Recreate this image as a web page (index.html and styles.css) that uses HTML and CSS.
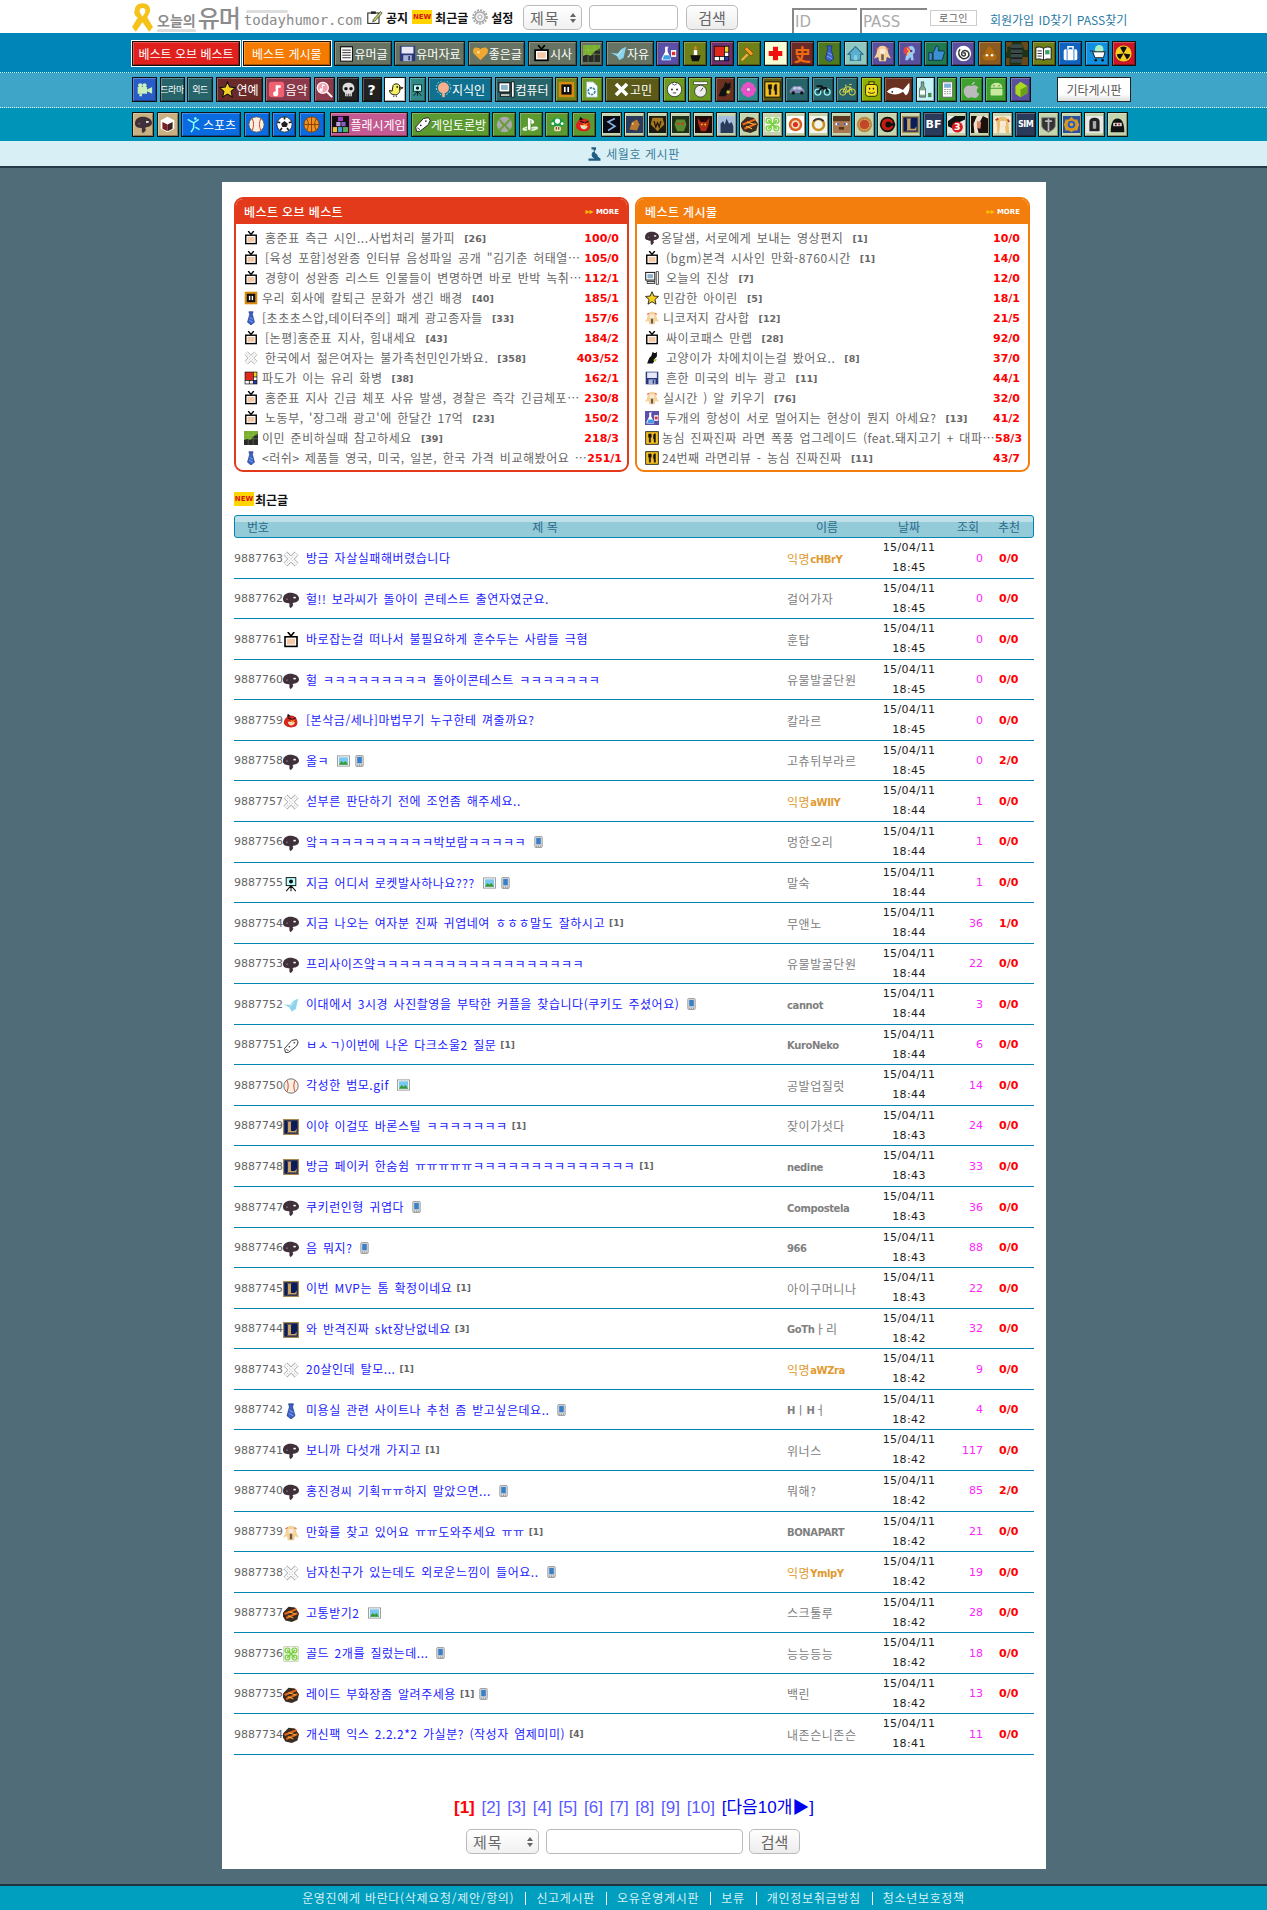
FILE: index.html
```html
<!DOCTYPE html>
<html lang="ko">
<head>
    <meta charset="UTF-8">
    <meta name="viewport" content="width=device-width, initial-scale=1.0">
    <title>오늘의유머</title>
    <link rel="stylesheet" href="styles.css">
</head>
<body>
    <!-- icon set -->
    <svg class="defs" xmlns="http://www.w3.org/2000/svg">
        <symbol id="tv" viewBox="0 0 20 20"><path d="M6 0l4 5 4-5" fill="none" stroke="#000" stroke-width="2"/><rect x="1.5" y="5" width="17" height="14" fill="#000"/><rect x="3.5" y="7" width="13" height="10" fill="#fff"/><rect x="5" y="8.500" width="10" height="7" fill="#f5c9a5"/></symbol>
        <symbol id="pal" viewBox="0 0 20 20"><path d="M0 9c0-5 4-8 9-8 6 0 11 3 11 7 0 3-3 5-6 5-1 0-2 1-2 2l1 1-2 3-2 1-1-2v-4c-4 0-8-1-8-5z" fill="#40303a"/><rect x="13" y="6" width="3" height="2" fill="#fff"/><rect x="4" y="8" width="2" height="2" fill="#7a6a70"/></symbol>
        <symbol id="gx" viewBox="0 0 20 20"><path d="M3 3l14 14M17 3L3 17" stroke="#aaa" stroke-width="6.5"/><path d="M3 3l14 14M17 3L3 17" stroke="#fff" stroke-width="4.5"/><path d="M3 3l14 14M17 3L3 17" stroke="#ccc" stroke-width="1.5" stroke-dasharray="1.5 1.5"/></symbol>
        <symbol id="chip" viewBox="0 0 20 20"><rect x="1" y="1" width="18" height="18" fill="#d98a12"/><rect x="4" y="4" width="12" height="12" fill="#111"/><rect x="7" y="7" width="2" height="6" fill="#fff"/><rect x="11" y="7" width="2" height="6" fill="#fff"/></symbol>
        <symbol id="tie" viewBox="0 0 20 20"><path d="M7 1h6l-1 4 3 11-5 4-5-4 3-11z" fill="#3a62c8" stroke="#1a2a70" stroke-width=".8"/><path d="M8 9l5 3M7 13l6 3" stroke="#9ab4f0"/></symbol>
        <symbol id="mond" viewBox="0 0 20 20"><rect x="1" y="1" width="18" height="18" fill="#111"/><rect x="2" y="2" width="11" height="11" fill="#e0281c"/><rect x="14" y="2" width="4" height="6" fill="#f5d020"/><rect x="14" y="14" width="4" height="4" fill="#2838b0"/><rect x="2" y="14" width="5" height="4" fill="#fff"/><rect x="8" y="14" width="5" height="4" fill="#eee"/><rect x="14" y="9" width="4" height="4" fill="#fff"/></symbol>
        <symbol id="chart" viewBox="0 0 20 20"><rect width="20" height="20" fill="#7ab030"/><path d="M0 20v-7l5-2 4 2 5-6 6-3v16z" fill="#2a2a2a"/><path d="M0 6h20M0 11h20M6 0v20M13 0v20" stroke="#a4d060" stroke-width=".7" opacity=".7"/></symbol>
        <symbol id="pc" viewBox="0 0 20 20"><rect x="1" y="2" width="13" height="11" fill="#fff" stroke="#111" stroke-width="1.4"/><rect x="3.500" y="4.500" width="8" height="6" fill="#8ab4c8"/><rect x="3" y="15" width="11" height="3" fill="#ddd" stroke="#111"/><rect x="16" y="1" width="3" height="18" fill="#fff" stroke="#111"/></symbol>
        <symbol id="star" viewBox="0 0 20 20"><path d="M10 1l2.600 6.200 6.600.6-5 4.400 1.500 6.600L10 15.300 4.300 18.800l1.500-6.600-5-4.400 6.600-.6z" fill="#f5d020" stroke="#111" stroke-width="1.2"/></symbol>
        <symbol id="girl" viewBox="0 0 20 20"><path d="M10 1c5 0 6 4 7 9l3 6-5-2-1 5H6l-1-5-5 2 3-6c1-5 2-9 7-9z" fill="#f3d39a"/><path d="M3 5l3-2M17 5l-3-2" stroke="#e8705a" stroke-width="1.5"/><rect x="7" y="5" width="6" height="5" fill="#fbe8d8"/><rect x="8.500" y="11" width="3" height="7" fill="#70584a"/></symbol>
        <symbol id="cat" viewBox="0 0 20 20"><path d="M11 1l2 2h2l2-2v7l-3 3-1 4-2 3H3l3-8 3-3z" fill="#111"/><path d="M13 11l4 1-2 3-3-1z" fill="#b8c840"/></symbol>
        <symbol id="floppy" viewBox="0 0 20 20"><rect x="1" y="1" width="18" height="18" fill="#28387a"/><rect x="3" y="2" width="14" height="8" fill="#e8e8f8"/><rect x="5" y="12" width="10" height="7" fill="#aab4d8"/><rect x="11" y="13" width="2" height="5" fill="#28387a"/></symbol>
        <symbol id="flask" viewBox="0 0 20 20"><rect width="20" height="20" fill="#5a50ac"/><path d="M6 2h4v1H9v5l4 8v2H2v-2l4-8V3z" fill="#fff"/><path d="M5 12h6l2 5H3z" fill="#38a0e8"/><rect x="13" y="6" width="6" height="8" fill="#fff"/><rect x="14" y="8" width="4" height="4" fill="#d83030"/></symbol>
        <symbol id="food" viewBox="0 0 20 20"><rect x="1" y="1" width="18" height="18" fill="#f5c020" stroke="#111" stroke-width="1.2"/><path d="M5 4v5h1v7h2V9h1V4M8 4v3M13 4h2v12h-2v-5h-1V6z" fill="#111" stroke="#111" stroke-width=".6"/></symbol>
        <symbol id="tripod" viewBox="0 0 20 20"><rect x="4" y="2" width="12" height="10" fill="#bff" stroke="#111" stroke-width="1.2"/><circle cx="10" cy="7" r="2.500" fill="#111"/><path d="M10 12v7M10 12l-6 7M10 12l6 7" stroke="#111" stroke-width="1.3"/></symbol>
        <symbol id="angry" viewBox="0 0 20 20"><path d="M10 3c5 0 8 4 8 9s-4 6-8 6-9-2-9-6 4-9 9-9z" fill="#d8261c"/><path d="M6 1l4 3-5 1z" fill="#111"/><path d="M6 11c3 0 7 0 9 1-2 5-8 5-9-1z" fill="#f0e0c0"/><path d="M9 8l3 2 3-2-3 5z" fill="#f0b020"/><path d="M6 6l5 2M16 6l-4 2" stroke="#111" stroke-width="1.3"/></symbol>
        <symbol id="wing" viewBox="0 0 20 20"><path d="M19 2l-3 13-5 3-3-5-7-4 8 1 4-5z" fill="#8ad4ec"/><path d="M8 13l6-6" stroke="#d8f4fc"/></symbol>
        <symbol id="pad" viewBox="0 0 20 20"><path d="M2 13l9-10 6-1 2 3-2 5-10 8H3z" fill="#fff" stroke="#222" stroke-width="1.1"/><circle cx="14" cy="6" r="1" fill="#222"/><circle cx="8" cy="11" r="1" fill="#222"/><path d="M4 14l3 2" stroke="#222"/></symbol>
        <symbol id="ball" viewBox="0 0 20 20"><circle cx="10" cy="10" r="9" fill="#f8f0e0" stroke="#555"/><path d="M5 3c2 4 2 10 0 14M15 3c-2 4-2 10 0 14" fill="none" stroke="#d83020" stroke-width="1.1"/></symbol>
        <symbol id="lol" viewBox="0 0 20 20"><rect width="20" height="20" fill="#0a1c5a"/><rect x=".8" y=".8" width="18.400" height="18.400" fill="none" stroke="#a88a50" stroke-width="1.6"/><path d="M5 3h6l-1 1v11h5l2-3v5H5l1-1V4z" fill="#c8a060"/></symbol>
        <symbol id="raid" viewBox="0 0 20 20"><path d="M0 8l7-7 8 1 5 7-2 8-7 3-8-2-3-5z" fill="#3a2c20"/><path d="M2 10l15-6M4 15l14-6" stroke="#f0641c" stroke-width="2.4"/><path d="M7 7l9 3M6 12l7 3" stroke="#f0c040" stroke-width="1.2"/></symbol>
        <symbol id="clover" viewBox="0 0 20 20"><rect x=".5" y=".5" width="19" height="19" rx="2" fill="#f0f4e8" stroke="#c0c8b0"/><path d="M5 5l10 10M15 5L5 15" stroke="#7ad040" stroke-width="2.2"/><circle cx="5.500" cy="5.500" r="3" fill="none" stroke="#7ad040" stroke-width="1.5"/><circle cx="14.500" cy="5.500" r="3" fill="none" stroke="#7ad040" stroke-width="1.5"/><circle cx="5.500" cy="14.500" r="3" fill="none" stroke="#7ad040" stroke-width="1.5"/><circle cx="14.500" cy="14.500" r="3" fill="none" stroke="#7ad040" stroke-width="1.5"/></symbol>
        <symbol id="notepad" viewBox="0 0 20 20"><rect x="3" y="2" width="14" height="17" fill="#fff" stroke="#111" stroke-width="1.2"/><path d="M3 2h14M5 6h10M5 9h10M5 12h10M5 15h10" stroke="#111"/></symbol>
        <symbol id="heart" viewBox="0 0 20 20"><path d="M10 18L2 10C0 6 2 3 5 3c2 0 4 1 5 2 1-1 3-2 5-2 3 0 5 3 3 7z" fill="#f0a830"/><rect x="6" y="7" width="3" height="3" fill="#ffe090"/></symbol>
        <symbol id="house" viewBox="0 0 20 20"><path d="M10 2L1 11h3v7h12v-7h3z" fill="#5ab0cc" stroke="#2a6a88" stroke-width="1.2"/><rect x="8" y="12" width="4" height="6" fill="#8acfe0"/></symbol>
        <symbol id="pony" viewBox="0 0 20 20"><path d="M5 3l8-2c3 2 4 5 3 8l-2 2 1 7h-3l-1-4-3 4H5l1-7-3-3z" fill="#9acdf0"/><path d="M4 3c3-2 6-1 7 3-2 3-3 5-5 7L3 8z" fill="#e84050"/><path d="M7 4l3 3-3 4" stroke="#f5d020" stroke-width="1.3" fill="none"/><circle cx="12" cy="7" r="1.500" fill="#603090"/></symbol>
        <symbol id="thumb" viewBox="0 0 20 20"><path d="M1 9h4v9H1zM6 9l4-8c2 0 3 1 2 6h6c1 0 2 2 1 3l-2 7c0 1-1 1-2 1H6z" fill="#3a90d0" stroke="#123" stroke-width=".9"/></symbol>
        <symbol id="spiral" viewBox="0 0 20 20"><circle cx="10" cy="10" r="9" fill="#fff"/><path d="M10 10c1-2 3 0 2 2-2 2-5 0-4-3 1-3 6-4 8 0 2 5-3 8-7 7-5-2-6-8-3-11" fill="none" stroke="#333" stroke-width="1.7"/></symbol>
        <symbol id="poop" viewBox="0 0 20 20"><path d="M10 1c1 2 4 3 3 5 2 0 3 2 2 4 2 0 4 2 3 5-1 3-4 3-8 3s-7 0-8-3c-1-3 1-5 3-5-1-2 0-4 2-4-1-2 1-3 3-5z" fill="#b06a10"/><circle cx="7" cy="12" r="1.500" fill="#fff"/><circle cx="13" cy="12" r="1.500" fill="#fff"/></symbol>
        <symbol id="camo" viewBox="0 0 20 20"><rect width="20" height="20" fill="#1c3414"/><path d="M0 0h6v4H2v5H0zM14 0h6v7h-3zM0 14h4v6H0zM15 13h5v7h-6z" fill="#6a4818"/><rect x="5" y="2" width="10" height="16" fill="#3a4a48"/><path d="M5 6h10M5 10h10M5 14h10" stroke="#111"/></symbol>
        <symbol id="book" viewBox="0 0 20 20"><path d="M1 3c3-1 6-1 9 1 3-2 6-2 9-1v14c-3-1-6-1-9 1-3-2-6-2-9-1z" fill="#fff" stroke="#111" stroke-width="1.1"/><path d="M10 4v14M3 7h5M3 10h5M3 13h5" stroke="#111"/><rect x="12" y="6" width="5" height="5" fill="#38a060"/></symbol>
        <symbol id="bag" viewBox="0 0 20 20"><path d="M7 5V2h6v3" fill="none" stroke="#fff" stroke-width="1.8"/><rect x="2" y="5" width="16" height="13" rx="2" fill="#fff"/><path d="M6 5v13M14 5v13" stroke="#1070d0"/></symbol>
        <symbol id="cart" viewBox="0 0 20 20"><circle cx="12" cy="5" r="5" fill="#a8f0c0"/><path d="M1 7h3l3 8h10l2-7H5" fill="#fff" stroke="#111" stroke-width="1.1"/><circle cx="8" cy="18" r="1.500" fill="#111"/><circle cx="16" cy="18" r="1.500" fill="#111"/></symbol>
        <symbol id="rad" viewBox="0 0 20 20"><circle cx="10" cy="10" r="9.500" fill="#f5d020"/><path d="M10 10L6 3a8 8 0 0 1 8 0zM10 10l8 1a8 8 0 0 1-4 6zM10 10l-4 7a8 8 0 0 1-4-6z" fill="#111"/></symbol>
        <symbol id="video" viewBox="0 0 20 20"><rect x="2" y="7" width="11" height="8" fill="#c8f0b8"/><circle cx="5" cy="5" r="2.500" fill="#c8f0b8"/><circle cx="10" cy="5" r="2.500" fill="#c8f0b8"/><path d="M13 10l6-3v8l-6-3z" fill="#c8f0b8"/><rect x="4" y="15" width="3" height="3" fill="#c8f0b8"/></symbol>
        <symbol id="note" viewBox="0 0 20 20"><rect x="1" y="1" width="18" height="18" rx="3" fill="#f06070"/><path d="M9 5h6v3h-3v7a3 3 0 1 1-3-3z" fill="#fff"/></symbol>
        <symbol id="musq" viewBox="0 0 20 20"><circle cx="8" cy="8" r="6.500" fill="#f0a0b0" stroke="#fff" stroke-width="1.5"/><path d="M7 4h3v2H8v5a2 2 0 1 1-1-2z" fill="#fff"/><path d="M13 13l6 6" stroke="#fff" stroke-width="2.4"/></symbol>
        <symbol id="skull" viewBox="0 0 20 20"><path d="M10 2c5 0 7 3 7 7 0 3-2 4-3 5v4H6v-4c-1-1-3-2-3-5 0-4 2-7 7-7z" fill="#ddd"/><circle cx="7" cy="9" r="2" fill="#111"/><circle cx="13" cy="9" r="2" fill="#111"/><path d="M8 15v3M10 15v3M12 15v3" stroke="#111" stroke-width=".7"/></symbol>
        <symbol id="bird" viewBox="0 0 20 20"><path d="M7 6c0-3 7-4 8 0v5c0 4-4 6-7 5-3 0-5-2-5-5l3 1z" fill="#f5f060" stroke="#111" stroke-width="1.1"/><path d="M15 7l4 1-4 2zM8 17v2M11 17v2" stroke="#111" fill="#f0a020"/><circle cx="12" cy="7" r="1" fill="#111"/></symbol>
        <symbol id="bulb" viewBox="0 0 20 20"><circle cx="10" cy="8" r="6.500" fill="#f5b090"/><circle cx="10" cy="8" r="8.500" fill="none" stroke="#bfe" stroke-dasharray="2 2"/><rect x="8.500" y="11" width="3" height="8" fill="#f5b090"/></symbol>
        <symbol id="doc" viewBox="0 0 20 20"><path d="M4 1h8l5 5v13H4z" fill="#fff" stroke="#8ab" stroke-width=".9"/><circle cx="10" cy="12" r="4" fill="none" stroke="#38a" stroke-width="2" stroke-dasharray="3 1"/></symbol>
        <symbol id="xw" viewBox="0 0 20 20"><path d="M2 5l3-3 5 5 5-5 3 3-5 5 5 5-3 3-5-5-5 5-3-3 5-5z" fill="#fff"/></symbol>
        <symbol id="baby" viewBox="0 0 20 20"><circle cx="10" cy="10" r="8.500" fill="#fff" stroke="#333"/><circle cx="7" cy="10" r="1.100" fill="#222"/><circle cx="13" cy="10" r="1.100" fill="#222"/><path d="M8 14h4" stroke="#222"/><path d="M7 3l3 2 3-2" stroke="#444" fill="none"/></symbol>
        <symbol id="scale" viewBox="0 0 20 20"><rect x="2" y="1" width="16" height="3" fill="#fff" stroke="#333" stroke-width=".7"/><circle cx="10" cy="12" r="7" fill="#eee" stroke="#333"/><path d="M10 12l3-4" stroke="#333"/></symbol>
        <symbol id="flower" viewBox="0 0 20 20"><g fill="#e850c8"><circle cx="10" cy="4.500" r="3.500"/><circle cx="10" cy="15.500" r="3.500"/><circle cx="4.500" cy="10" r="3.500"/><circle cx="15.500" cy="10" r="3.500"/><circle cx="6" cy="6" r="3"/><circle cx="14" cy="6" r="3"/><circle cx="6" cy="14" r="3"/><circle cx="14" cy="14" r="3"/></g><circle cx="10" cy="10" r="2" fill="#f8c0e8"/></symbol>
        <symbol id="car" viewBox="0 0 20 20"><path d="M1 11l4-5h9l4 5v3H1z" fill="#8088b0"/><path d="M6 7h3v3H4zM10 7h3l3 3h-6z" fill="#c8d0e8"/><circle cx="5" cy="14" r="2" fill="#111"/><circle cx="15" cy="14" r="2" fill="#111"/></symbol>
        <symbol id="moto" viewBox="0 0 20 20"><circle cx="4.500" cy="13" r="3.500" fill="none" stroke="#9ee" stroke-width="1.5"/><circle cx="15.500" cy="13" r="3.500" fill="none" stroke="#9ee" stroke-width="1.5"/><path d="M5 13l4-5h5l2 5M3 6h6l3 4" fill="none" stroke="#111" stroke-width="2"/></symbol>
        <symbol id="bike" viewBox="0 0 20 20"><circle cx="4.500" cy="13" r="3.700" fill="none" stroke="#f0e040" stroke-width="1.1"/><circle cx="15.500" cy="13" r="3.700" fill="none" stroke="#f0e040" stroke-width="1.1"/><path d="M4.500 13l3-6h6l2 6M7.500 7l3 6h-6M13.500 7l-3 6M7 5h2M12 4h3" fill="none" stroke="#f0e040" stroke-width="1.1"/></symbol>
        <symbol id="lego" viewBox="0 0 20 20"><rect x="7" y="1" width="6" height="3" fill="#f5e020" stroke="#111"/><rect x="3" y="4" width="14" height="14" rx="3" fill="#f5e020" stroke="#111"/><rect x="7" y="8" width="1.500" height="2" fill="#111"/><rect x="11.500" y="8" width="1.500" height="2" fill="#111"/><path d="M6 13c2 2 6 2 8 0" stroke="#111" fill="none"/></symbol>
        <symbol id="fish" viewBox="0 0 28 20"><path d="M1 12c5-6 12-6 18-2l7-8c1 5 0 13-4 14l-3-4c-6 4-12 4-18 0z" fill="#fff"/><circle cx="7" cy="12" r="1" fill="#111"/></symbol>
        <symbol id="soju" viewBox="0 0 20 20"><path d="M5 1h3v5l2 3v10H3V9l2-3z" fill="#7aa88a" stroke="#333" stroke-width=".7"/><rect x="3.500" y="11" width="6" height="5" fill="#fff"/><rect x="13" y="14" width="4" height="5" fill="#4a8a50"/></symbol>
        <symbol id="phone" viewBox="0 0 20 20"><rect x="4" y="1" width="12" height="18" fill="#fff" stroke="#666"/><rect x="6" y="3" width="8" height="5" fill="#7ab0d8"/><path d="M6 10h8M6 12.500h8M6 15h8" stroke="#888" stroke-dasharray="2 1"/></symbol>
        <symbol id="apple" viewBox="0 0 20 20"><path d="M10 6c3-2 7-1 8 2-3 2-2 6 1 7-1 3-3 5-5 5l-4-1-4 1c-3-1-6-6-5-10 1-4 6-6 9-4z" fill="#bbb"/><path d="M10 5c0-2 2-4 4-4 0 2-2 4-4 4z" fill="#bbb"/></symbol>
        <symbol id="android" viewBox="0 0 20 20"><path d="M3 8a7 6 0 0 1 14 0z" fill="#c8e8a0"/><rect x="3" y="9" width="14" height="8" rx="1" fill="#c8e8a0"/><circle cx="7" cy="5.500" r=".9" fill="#4a8a20"/><circle cx="13" cy="5.500" r=".9" fill="#4a8a20"/></symbol>
        <symbol id="cube" viewBox="0 0 20 20"><path d="M10 1l8 5v8l-8 5-6-4V6z" fill="#a8d820"/><path d="M10 10l8-4v8l-8 5z" fill="#6aa018"/></symbol>
        <symbol id="tbox" viewBox="0 0 20 20"><path d="M10 1l8 4v10l-8 4-8-4V5z" fill="#fff"/><path d="M4 7l6 3v8l-6-3z" fill="#7a2020"/><path d="M16 7l-6 3v8l6-3z" fill="#402020"/></symbol>
        <symbol id="sport" viewBox="0 0 20 20"><circle cx="11" cy="3" r="1.600" fill="#8ff"/><path d="M2 4l7 4 6-4M9 8v6l-3 5M11 13l5 3" fill="none" stroke="#8ff" stroke-width="1.8"/></symbol>
        <symbol id="soccer" viewBox="0 0 20 20"><circle cx="10" cy="10" r="9" fill="#fff" stroke="#222"/><path d="M10 6l4 3-1.500 4h-5L6 9z" fill="#222"/><path d="M2 7l3 1M18 7l-3 1M10 1v3M5 17l2-3M15 17l-2-3" stroke="#222" stroke-width="2"/></symbol>
        <symbol id="basket" viewBox="0 0 20 20"><circle cx="10" cy="10" r="9" fill="#f09020" stroke="#7a3a00"/><path d="M1 10h18M10 1v18M4 3c3 4 3 10 0 14M16 3c-3 4-3 10 0 14" fill="none" stroke="#7a3a00"/></symbol>
        <symbol id="blocks" viewBox="0 0 20 20"><rect width="20" height="20" fill="#111"/><rect x="7" y="1" width="6" height="5" fill="#a040c0"/><rect x="5" y="7" width="5" height="5" fill="#c0a0e0"/><rect x="11" y="7" width="5" height="5" fill="#8060c0"/><rect x="1" y="13" width="5" height="6" fill="#f0c040"/><rect x="7" y="13" width="5" height="6" fill="#40a0d0"/><rect x="13" y="13" width="6" height="6" fill="#50b060"/></symbol>
        <symbol id="xbox" viewBox="0 0 20 20"><circle cx="10" cy="10" r="9" fill="#aaa"/><path d="M4 3l6 6 6-6 1 2-5 6 6 6-3 1-5-6-5 6-3-1 6-6-5-6z" fill="#6a9a40"/></symbol>
        <symbol id="ps" viewBox="0 0 20 20"><path d="M7 2l5 2c3 1 3 6-1 5V5l-1-.5V17l-3-1z" fill="#fff"/><path d="M1 14l5-2v2l-3 1h3v2c-3 1-7 0-5-3zM11 13c3-1 8-1 8 1 0 2-5 3-8 4v-2l5-1h-5z" fill="#e8f0e0"/></symbol>
        <symbol id="mario" viewBox="0 0 20 20"><path d="M2 10c0-5 4-8 8-8s8 3 8 8c0 2-2 2-3 2H5c-1 0-3 0-3-2z" fill="#18a040"/><circle cx="10" cy="6" r="3" fill="#fff"/><circle cx="4.500" cy="9" r="1.700" fill="#fff"/><circle cx="15.500" cy="9" r="1.700" fill="#fff"/><rect x="6" y="12" width="8" height="6" rx="2" fill="#f8e0b0"/><rect x="8" y="13" width="1" height="3" fill="#111"/><rect x="11" y="13" width="1" height="3" fill="#111"/></symbol>
        <symbol id="s2" viewBox="0 0 20 20"><rect width="20" height="20" fill="#0a0a14"/><path d="M14 3L6 7l8 5-8 5" fill="none" stroke="#8ab0e0" stroke-width="2"/></symbol>
        <symbol id="sc" viewBox="0 0 20 20"><rect width="20" height="20" fill="#2a3a5a"/><path d="M4 16l3-9 6-3 3 6-3 7z" fill="#b87830"/><circle cx="8" cy="9" r="1.200" fill="#f0d050"/></symbol>
        <symbol id="wow" viewBox="0 0 20 20"><rect width="20" height="20" fill="#1a1a10"/><path d="M4 2h12l2 8-8 8-8-8z" fill="#a87820"/><path d="M6 6l2 7 2-5 2 5 2-7" stroke="#201808" fill="none" stroke-width="1.5"/></symbol>
        <symbol id="orc" viewBox="0 0 20 20"><rect width="20" height="20" fill="#203018"/><path d="M5 4h10l2 6-3 8H6l-3-8z" fill="#5a8a30"/><rect x="6" y="8" width="3" height="2" fill="#e03020"/><rect x="11" y="8" width="3" height="2" fill="#e03020"/></symbol>
        <symbol id="diablo" viewBox="0 0 20 20"><rect width="20" height="20" fill="#200a08"/><path d="M3 2l4 5h6l4-5-1 8-3 8H7l-3-8z" fill="#a82a18"/><rect x="7" y="9" width="2" height="2" fill="#f0c020"/><rect x="11" y="9" width="2" height="2" fill="#f0c020"/></symbol>
        <symbol id="castle" viewBox="0 0 20 20"><rect width="20" height="20" fill="#a8c0e0"/><path d="M3 20V9l3-3 2 4 2-7 3 6 3-2 2 5v8z" fill="#2a3a5a"/></symbol>
        <symbol id="target" viewBox="0 0 20 20"><rect width="20" height="20" fill="#fff"/><circle cx="10" cy="10" r="8" fill="#d86020"/><circle cx="10" cy="10" r="5" fill="#f0e0c0"/><circle cx="10" cy="10" r="3" fill="#d83020"/></symbol>
        <symbol id="ring" viewBox="0 0 20 20"><rect width="20" height="20" fill="#f0f4ec"/><circle cx="10" cy="10" r="6.500" fill="none" stroke="#c89020" stroke-width="3"/><path d="M4 6a8 8 0 0 1 12 0" stroke="#334" stroke-width="2" fill="none"/></symbol>
        <symbol id="mine" viewBox="0 0 20 20"><rect width="20" height="20" fill="#a87850"/><rect width="20" height="6" fill="#5a3a20"/><rect x="3" y="8" width="4" height="3" fill="#fff"/><rect x="13" y="8" width="4" height="3" fill="#fff"/><rect x="5" y="8" width="2" height="3" fill="#504ab0"/><rect x="13" y="8" width="2" height="3" fill="#504ab0"/><rect x="7" y="13" width="6" height="3" fill="#5a3020"/></symbol>
        <symbol id="pie" viewBox="0 0 20 20"><circle cx="10" cy="10" r="9" fill="#b88848"/><circle cx="10" cy="10" r="6" fill="#c04828" stroke="#f0c060" stroke-dasharray="2 1"/></symbol>
        <symbol id="redc" viewBox="0 0 20 20"><circle cx="10" cy="10" r="9" fill="#111"/><circle cx="10" cy="10" r="7" fill="#c81c10"/><circle cx="11" cy="10" r="3.500" fill="#111"/><rect x="12" y="8.500" width="7" height="3" fill="#111"/></symbol>
        <symbol id="three" viewBox="0 0 20 20"><rect width="20" height="20" fill="#e8e8e8"/><path d="M0 6l8-6h12v4L12 8 8 16 0 12z" fill="#111"/><circle cx="11" cy="13" r="6.500" fill="#d81c1c"/><text x="11" y="17" text-anchor="middle" font-size="11" font-weight="700" fill="#fff" font-family="DejaVu Sans">3</text></symbol>
        <symbol id="dark" viewBox="0 0 20 20"><rect width="20" height="20" fill="#f0e0d0"/><path d="M14 0l6 3v17H9L7 12l4-6zM0 0h7L3 9l1 11H0z" fill="#1a100c"/><path d="M7 6l5 1-1 8-4-1z" fill="#d88868"/></symbol>
        <symbol id="blonde" viewBox="0 0 20 20"><rect width="20" height="20" fill="#f5ecd8"/><path d="M4 20L3 7c0-4 3-6 7-6 5 0 7 3 7 7l1 12h-4l-1-8H7l-1 8z" fill="#e8c070"/><rect x="7" y="6" width="7" height="6" fill="#fbe8d8"/><path d="M2 5l3-2M18 7l-2-3" stroke="#c03030" stroke-width="2"/></symbol>
        <symbol id="wot" viewBox="0 0 20 20"><path d="M2 2h16v9c0 4-4 6-8 8-4-2-8-4-8-8z" fill="#333" stroke="#888"/><path d="M10 3v15M6 6h8" stroke="#bbb" stroke-width="2"/></symbol>
        <symbol id="hs" viewBox="0 0 20 20"><rect width="20" height="20" fill="#2a50a0"/><path d="M10 1l3 3h4l1 4 1 2-1 3-1 4h-4l-3 2-3-2H3l-1-4-1-3 1-2 1-4h4z" fill="#d89820"/><circle cx="10" cy="10" r="4.500" fill="#2a60c0"/><circle cx="10" cy="10" r="2" fill="#f0a030"/></symbol>
        <symbol id="tomb" viewBox="0 0 20 20"><rect width="20" height="20" fill="#e8e8e8"/><path d="M4 18V7c0-4 3-5 6-5s6 1 6 5v11z" fill="#222"/><rect x="8" y="6" width="4" height="9" fill="#aaa"/></symbol>
        <symbol id="mask" viewBox="0 0 20 20"><path d="M2 19c0-9 2-16 8-16s8 7 8 16z" fill="#111"/><rect x="5" y="8" width="10" height="4" fill="#d8d8d8"/><rect x="7" y="9" width="2" height="2" fill="#111"/><rect x="11" y="9" width="2" height="2" fill="#c82020"/></symbol>
        <symbol id="candle" viewBox="0 0 20 20"><path d="M10 1c2 2 2 4 0 5-2-1-2-3 0-5z" fill="#f08020"/><rect x="8" y="6" width="4" height="6" fill="#fff"/><path d="M4 12h12l-2 7H6z" fill="#111"/></symbol>
        <symbol id="hammer" viewBox="0 0 20 20"><path d="M8 2l8 8-3 3-8-8z" fill="#f09a20" stroke="#7a3a00" stroke-width=".8"/><path d="M9 11l-7 7" stroke="#f0b040" stroke-width="2.6"/></symbol>
        <symbol id="redcross" viewBox="0 0 20 20"><path d="M7 2h6v5h5v6h-5v5H7v-5H2V7h5z" fill="#f01010"/></symbol>
        <symbol id="tube" viewBox="0 0 20 20"><path d="M6 1h6v3l-2 2 1 3 2 1 2 4 3 2v3H2v-3h8l-3-2-1-3 1-3 2-1V4H6z" fill="#1f5f85"/></symbol>
        <symbol id="memo" viewBox="0 0 20 20"><rect x="1" y="5" width="14" height="13" fill="#fff" stroke="#222" stroke-width="1.3"/><rect x="5" y="3" width="6" height="3" fill="#222"/><path d="M8 13l9-10 2 2-9 10-3 1z" fill="#b8d060" stroke="#222" stroke-width=".8"/></symbol>
        <symbol id="gear" viewBox="0 0 20 20"><circle cx="10" cy="10" r="6.500" fill="#eee" stroke="#999" stroke-width="1.5"/><circle cx="10" cy="10" r="8.500" fill="none" stroke="#aaa" stroke-width="2.5" stroke-dasharray="2.5 1.5"/><circle cx="10" cy="10" r="2.500" fill="#fff" stroke="#999"/></symbol>
        <symbol id="ribbon" viewBox="0 0 22 32"><path d="M11 1c5 0 8 3 8 7 0 3-2 6-3 8l6 10-4 5-7-10-7 10-4-5 6-10C2 14 2 11 3 8c0-4 3-7 8-7zm0 5c-2 0-3 1-3 3s1 3 3 6c2-3 3-4 3-6s-1-3-3-3z" fill="#f5c21a" fill-rule="evenodd"/></symbol>
        <symbol id="pic" viewBox="0 0 14 12"><rect x=".5" y=".5" width="13" height="11" fill="#fff" stroke="#999"/><rect x="2" y="2" width="10" height="8" fill="#7ac8f0"/><path d="M2 10l3-4 2 2 2-2 3 4z" fill="#3a9a30"/></symbol>
        <symbol id="mob" viewBox="0 0 9 13"><rect x=".5" y=".5" width="8" height="12" rx="1" fill="#ddd" stroke="#999"/><rect x="2" y="2" width="5" height="7" fill="#3a80c8"/><path d="M2 11h5" stroke="#666" stroke-dasharray="1 1"/></symbol>
    </svg>

    <div class="top">
        <div class="wrap top-inner">
            <a class="logo" href="#">
                <svg class="ribbon"><use href="#ribbon"/></svg>
                <span class="logo-small">오늘의</span><span class="logo-big">유머</span><span class="logo-url">todayhumor.com</span>
            </a>
            <div class="quick">
                <svg class="ico16"><use href="#memo"/></svg><a href="#">공지</a>
                <span class="new-badge">NEW</span><a href="#">최근글</a>
                <svg class="ico16"><use href="#gear"/></svg><a href="#">설정</a>
            </div>
            <form class="search top-search">
                <span class="sel"><select><option>제목</option></select></span>
                <input class="q" type="text">
                <button class="go" type="button">검색</button>
            </form>
            <div class="login">
                <input type="text" placeholder="ID">
                <input type="text" placeholder="PASS">
                <button type="button">로그인</button>
            </div>
            <div class="member"><a href="#">회원가입</a> <a href="#">ID찾기</a> <a href="#">PASS찾기</a></div>
        </div>
    </div>

    <div class="nav nav1">
        <div class="wrap nav-row">
            <a class="btn w108 red" href="#">베스트 오브 베스트</a>
            <a class="btn w88 orange" href="#">베스트 게시물</a>
            <a class="btn w58 gray" href="#"><svg><use href="#notepad"/></svg>유머글</a>
            <a class="btn w71 gray" href="#"><svg><use href="#floppy"/></svg>유머자료</a>
            <a class="btn w57 gray" href="#"><svg><use href="#heart"/></svg>좋은글</a>
            <a class="btn w49 gray" href="#"><svg><use href="#tv"/></svg>시사</a>
            <a class="btn w23 gray" href="#"><svg><use href="#chart"/></svg></a>
            <a class="btn w48 gray" href="#"><svg><use href="#wing"/></svg>자유</a>
            <a class="btn w24 purple" href="#"><svg><use href="#flask"/></svg></a>
            <a class="btn w24 olive" href="#"><svg><use href="#candle"/></svg></a>
            <a class="btn w24 plum" href="#"><svg><use href="#mond"/></svg></a>
            <a class="btn w24 olive" href="#"><svg><use href="#hammer"/></svg></a>
            <a class="btn w24 pale" href="#"><svg><use href="#redcross"/></svg></a>
            <a class="btn w24 maroon shi" href="#">史</a>
            <a class="btn w24 green" href="#"><svg><use href="#tie"/></svg></a>
            <a class="btn w24 sky" href="#"><svg><use href="#house"/></svg></a>
            <a class="btn w24 purple" href="#"><svg><use href="#girl"/></svg></a>
            <a class="btn w24 purple" href="#"><svg><use href="#pony"/></svg></a>
            <a class="btn w24 dgreen" href="#"><svg><use href="#thumb"/></svg></a>
            <a class="btn w24 purple" href="#"><svg><use href="#spiral"/></svg></a>
            <a class="btn w24 brown" href="#"><svg><use href="#poop"/></svg></a>
            <a class="btn w24 camo" href="#"><svg class="full"><use href="#camo"/></svg></a>
            <a class="btn w24 olive" href="#"><svg><use href="#book"/></svg></a>
            <a class="btn w24 blue" href="#"><svg><use href="#bag"/></svg></a>
            <a class="btn w24 cyan" href="#"><svg><use href="#cart"/></svg></a>
            <a class="btn w24 crimson" href="#"><svg><use href="#rad"/></svg></a>
        </div>
    </div>

    <div class="nav nav2">
        <div class="wrap nav-row">
            <a class="btn w25 royal" href="#"><svg><use href="#video"/></svg></a>
            <a class="btn w25 teal tiny" href="#">드라마</a>
            <a class="btn w26 teal tiny" href="#">외드</a>
            <a class="btn w47 maroon" href="#"><svg><use href="#star"/></svg>연예</a>
            <a class="btn w46 rose" href="#"><svg><use href="#note"/></svg>음악</a>
            <a class="btn w21 rose" href="#"><svg><use href="#musq"/></svg></a>
            <a class="btn w22 black" href="#"><svg><use href="#skull"/></svg></a>
            <a class="btn w20 black qm" href="#">?</a>
            <a class="btn w22 white" href="#"><svg><use href="#bird"/></svg></a>
            <a class="btn w17 jade" href="#"><svg class="small"><use href="#tripod"/></svg></a>
            <a class="btn w64 ocean" href="#"><svg><use href="#bulb"/></svg>지식인</a>
            <a class="btn w58 teal" href="#"><svg><use href="#pc"/></svg>컴퓨터</a>
            <a class="btn w23 olive" href="#"><svg><use href="#chip"/></svg></a>
            <a class="btn w22 lime" href="#"><svg><use href="#doc"/></svg></a>
            <a class="btn w55 drab" href="#"><svg><use href="#xw"/></svg>고민</a>
            <a class="btn w23 lime" href="#"><svg><use href="#baby"/></svg></a>
            <a class="btn w24 lime" href="#"><svg><use href="#scale"/></svg></a>
            <a class="btn w20 brown2" href="#"><svg><use href="#cat"/></svg></a>
            <a class="btn w22 jade" href="#"><svg><use href="#flower"/></svg></a>
            <a class="btn w21 drab" href="#"><svg><use href="#food"/></svg></a>
            <a class="btn w24 teal" href="#"><svg><use href="#car"/></svg></a>
            <a class="btn w22 teal" href="#"><svg><use href="#moto"/></svg></a>
            <a class="btn w22 teal" href="#"><svg><use href="#bike"/></svg></a>
            <a class="btn w21 yellow" href="#"><svg><use href="#lego"/></svg></a>
            <a class="btn w29 brown2" href="#"><svg class="fish"><use href="#fish"/></svg></a>
            <a class="btn w19 ice" href="#"><svg><use href="#soju"/></svg></a>
            <a class="btn w20 leaf" href="#"><svg><use href="#phone"/></svg></a>
            <a class="btn w23 leaf" href="#"><svg><use href="#apple"/></svg></a>
            <a class="btn w22 leaf" href="#"><svg><use href="#android"/></svg></a>
            <a class="btn w21 purple" href="#"><svg><use href="#cube"/></svg></a>
            <a class="etc" href="#">기타게시판</a>
        </div>
    </div>

    <div class="nav nav3">
        <div class="wrap nav-row">
            <a class="btn w22 tan" href="#"><svg><use href="#pal"/></svg></a>
            <a class="btn w22 tan" href="#"><svg><use href="#tbox"/></svg></a>
            <a class="btn w60 azure" href="#"><svg><use href="#sport"/></svg>스포츠</a>
            <a class="btn w26 azure" href="#"><svg><use href="#ball"/></svg></a>
            <a class="btn w24 azure" href="#"><svg><use href="#soccer"/></svg></a>
            <a class="btn w26 azure" href="#"><svg><use href="#basket"/></svg></a>
            <a class="btn w78 pink push" href="#"><svg class="full-h"><use href="#blocks"/></svg>플래시게임</a>
            <a class="btn w79 grass" href="#"><svg><use href="#pad"/></svg>게임토론방</a>
            <a class="btn w24 grass" href="#"><svg><use href="#xbox"/></svg></a>
            <a class="btn w24 grass" href="#"><svg><use href="#ps"/></svg></a>
            <a class="btn w24 grass" href="#"><svg><use href="#mario"/></svg></a>
            <a class="btn w24 grass" href="#"><svg><use href="#angry"/></svg></a>
            <div class="game-group">
                <a class="btn w21 sage" href="#"><svg><use href="#s2"/></svg></a>
                <a class="btn w21 sage" href="#"><svg><use href="#sc"/></svg></a>
                <a class="btn w21 sage" href="#"><svg><use href="#wow"/></svg></a>
                <a class="btn w21 sage" href="#"><svg><use href="#orc"/></svg></a>
                <a class="btn w21 sage" href="#"><svg><use href="#diablo"/></svg></a>
                <a class="btn w21 sage" href="#"><svg><use href="#castle"/></svg></a>
                <a class="btn w21 sage" href="#"><svg><use href="#raid"/></svg></a>
                <a class="btn w21 sage" href="#"><svg><use href="#clover"/></svg></a>
                <a class="btn w21 sage" href="#"><svg><use href="#target"/></svg></a>
                <a class="btn w21 sage" href="#"><svg><use href="#ring"/></svg></a>
                <a class="btn w21 sage" href="#"><svg><use href="#mine"/></svg></a>
                <a class="btn w21 sage" href="#"><svg><use href="#pie"/></svg></a>
                <a class="btn w21 sage" href="#"><svg><use href="#redc"/></svg></a>
                <a class="btn w21 sage" href="#"><svg><use href="#lol"/></svg></a>
                <a class="btn w21 navy bf" href="#">BF</a>
                <a class="btn w21 sage" href="#"><svg><use href="#three"/></svg></a>
                <a class="btn w21 sage" href="#"><svg><use href="#dark"/></svg></a>
                <a class="btn w21 sage" href="#"><svg><use href="#blonde"/></svg></a>
                <a class="btn w21 navy sim" href="#">SIM</a>
                <a class="btn w21 sage" href="#"><svg><use href="#wot"/></svg></a>
                <a class="btn w21 sage" href="#"><svg><use href="#hs"/></svg></a>
                <a class="btn w21 sage" href="#"><svg><use href="#tomb"/></svg></a>
                <a class="btn w21 sage" href="#"><svg><use href="#mask"/></svg></a>
            </div>
        </div>
    </div>

    <div class="crumb"><svg><use href="#tube"/></svg><a href="#">세월호 게시판</a></div>

    <div class="main">
        <!-- best boxes -->
        <div class="boxes">
            <div class="box box-red">
                <div class="box-head"><span>베스트 오브 베스트</span><span class="more"><i>▸▸</i> MORE</span></div>
                <ul class="box-list">
                    <li><svg class="w21"><use href="#tv"/></svg><a href="#">홍준표 측근 시인...사법처리 불가피</a><b class="cnt">[26]</b><em>100/0</em></li>
                    <li><svg class="w21"><use href="#tv"/></svg><a href="#">[육성 포함]성완종 인터뷰 음성파일 공개 "김기춘 허태열…</a><em>105/0</em></li>
                    <li><svg class="w21"><use href="#tv"/></svg><a href="#">경향이 성완종 리스트 인물들이 변명하면 바로 반박 녹취…</a><em>112/1</em></li>
                    <li><svg class="w18"><use href="#chip"/></svg><a href="#">우리 회사에 칼퇴근 문화가 생긴 배경</a><b class="cnt">[40]</b><em>185/1</em></li>
                    <li><svg class="w18"><use href="#tie"/></svg><a href="#">[초초초스압,데이터주의] 패게 광고종자들</a><b class="cnt">[33]</b><em>157/6</em></li>
                    <li><svg class="w21"><use href="#tv"/></svg><a href="#">[논평]홍준표 지사, 힘내세요</a><b class="cnt">[43]</b><em>184/2</em></li>
                    <li><svg class="w21"><use href="#gx"/></svg><a href="#">한국에서 젊은여자는 불가촉천민인가봐요.</a><b class="cnt">[358]</b><em>403/52</em></li>
                    <li><svg class="w18"><use href="#mond"/></svg><a href="#">파도가 이는 유리 화병</a><b class="cnt">[38]</b><em>162/1</em></li>
                    <li><svg class="w21"><use href="#tv"/></svg><a href="#">홍준표 지사 긴급 체포 사유 발생, 경찰은 즉각 긴급체포…</a><em>230/8</em></li>
                    <li><svg class="w21"><use href="#tv"/></svg><a href="#">노동부, '장그래 광고'에 한달간 17억</a><b class="cnt">[23]</b><em>150/2</em></li>
                    <li><svg class="w18"><use href="#chart"/></svg><a href="#">이민 준비하실때 참고하세요</a><b class="cnt">[39]</b><em>218/3</em></li>
                    <li><svg class="w18"><use href="#tie"/></svg><a href="#">&lt;러쉬&gt; 제품들 영국, 미국, 일본, 한국 가격 비교해봤어요 …</a><em>251/1</em></li>
                </ul>
            </div>
            <div class="box box-orange">
                <div class="box-head"><span>베스트 게시물</span><span class="more"><i>▸▸</i> MORE</span></div>
                <ul class="box-list">
                    <li><svg class="w16"><use href="#pal"/></svg><a href="#">옹달샘, 서로에게 보내는 영상편지</a><b class="cnt">[1]</b><em>10/0</em></li>
                    <li><svg class="w21"><use href="#tv"/></svg><a href="#">(bgm)본격 시사인 만화-8760시간</a><b class="cnt">[1]</b><em>14/0</em></li>
                    <li><svg class="w21"><use href="#pc"/></svg><a href="#">오늘의 진상</a><b class="cnt">[7]</b><em>12/0</em></li>
                    <li><svg class="w18"><use href="#star"/></svg><a href="#">민감한 아이린</a><b class="cnt">[5]</b><em>18/1</em></li>
                    <li><svg class="w18"><use href="#girl"/></svg><a href="#">니코저지 감사합</a><b class="cnt">[12]</b><em>21/5</em></li>
                    <li><svg class="w21"><use href="#tv"/></svg><a href="#">싸이코패스 만렙</a><b class="cnt">[28]</b><em>92/0</em></li>
                    <li><svg class="w21"><use href="#cat"/></svg><a href="#">고양이가 차에치이는걸 봤어요..</a><b class="cnt">[8]</b><em>37/0</em></li>
                    <li><svg class="w21"><use href="#floppy"/></svg><a href="#">흔한 미국의 비누 광고</a><b class="cnt">[11]</b><em>44/1</em></li>
                    <li><svg class="w18"><use href="#girl"/></svg><a href="#">실시간 ) 알 키우기</a><b class="cnt">[76]</b><em>32/0</em></li>
                    <li><svg class="w21"><use href="#flask"/></svg><a href="#">두개의 항성이 서로 멀어지는 현상이 뭔지 아세요?</a><b class="cnt">[13]</b><em>41/2</em></li>
                    <li><svg class="w17"><use href="#food"/></svg><a href="#">농심 진짜진짜 라면 폭풍 업그레이드 (feat.돼지고기 + 대파…</a><em>58/3</em></li>
                    <li><svg class="w17"><use href="#food"/></svg><a href="#">24번째 라면리뷰 - 농심 진짜진짜</a><b class="cnt">[11]</b><em>43/7</em></li>
                </ul>
            </div>
        </div>

        <h3 class="list-title"><span class="new-badge">NEW</span>최근글</h3>

        <!-- recent list -->
        <div class="list-head">
            <span class="h-no">번호</span><span class="h-title">제 목</span><span class="h-name">이름</span><span class="h-date">날짜</span><span class="h-hit">조회</span><span class="h-rec">추천</span>
        </div>
        <div class="list">
            <div class="row"><span class="no">9887763</span><svg class="kind"><use href="#gx"/></svg><span class="title"><a href="#">방금 자살실패해버렸습니다</a></span><span class="name anon">익명<b>cHBrY</b></span><span class="date">15/04/11<br>18:45</span><span class="hit">0</span><span class="rec">0/0</span></div>
            <div class="row"><span class="no">9887762</span><svg class="kind"><use href="#pal"/></svg><span class="title"><a href="#">헐!! 보라씨가 돌아이 콘테스트 출연자였군요.</a></span><span class="name">걸어가자</span><span class="date">15/04/11<br>18:45</span><span class="hit">0</span><span class="rec">0/0</span></div>
            <div class="row"><span class="no">9887761</span><svg class="kind"><use href="#tv"/></svg><span class="title"><a href="#">바로잡는걸 떠나서 불필요하게 훈수두는 사람들 극혐</a></span><span class="name">훈탑</span><span class="date">15/04/11<br>18:45</span><span class="hit">0</span><span class="rec">0/0</span></div>
            <div class="row"><span class="no">9887760</span><svg class="kind"><use href="#pal"/></svg><span class="title"><a href="#">헐 ㅋㅋㅋㅋㅋㅋㅋㅋㅋ 돌아이콘테스트 ㅋㅋㅋㅋㅋㅋㅋ</a></span><span class="name">유물발굴단원</span><span class="date">15/04/11<br>18:45</span><span class="hit">0</span><span class="rec">0/0</span></div>
            <div class="row"><span class="no">9887759</span><svg class="kind"><use href="#angry"/></svg><span class="title"><a href="#">[본삭금/세나]마법무기 누구한테 껴줄까요?</a></span><span class="name">칼라르</span><span class="date">15/04/11<br>18:45</span><span class="hit">0</span><span class="rec">0/0</span></div>
            <div class="row"><span class="no">9887758</span><svg class="kind"><use href="#pal"/></svg><span class="title"><a href="#">올ㅋ</a><svg class="pic"><use href="#pic"/></svg><svg class="mob"><use href="#mob"/></svg></span><span class="name">고츄뒤부라르</span><span class="date">15/04/11<br>18:45</span><span class="hit">0</span><span class="rec">2/0</span></div>
            <div class="row"><span class="no">9887757</span><svg class="kind"><use href="#gx"/></svg><span class="title"><a href="#">섣부른 판단하기 전에 조언좀 해주세요..</a></span><span class="name anon">익명<b>aWIlY</b></span><span class="date">15/04/11<br>18:44</span><span class="hit">1</span><span class="rec">0/0</span></div>
            <div class="row"><span class="no">9887756</span><svg class="kind"><use href="#pal"/></svg><span class="title"><a href="#">앜ㅋㅋㅋㅋㅋㅋㅋㅋㅋㅋ박보람ㅋㅋㅋㅋㅋ</a><svg class="mob"><use href="#mob"/></svg></span><span class="name">멍한오리</span><span class="date">15/04/11<br>18:44</span><span class="hit">1</span><span class="rec">0/0</span></div>
            <div class="row"><span class="no">9887755</span><svg class="kind"><use href="#tripod"/></svg><span class="title"><a href="#">지금 어디서 로켓발사하나요???</a><svg class="pic"><use href="#pic"/></svg><svg class="mob"><use href="#mob"/></svg></span><span class="name">말숙</span><span class="date">15/04/11<br>18:44</span><span class="hit">1</span><span class="rec">0/0</span></div>
            <div class="row"><span class="no">9887754</span><svg class="kind"><use href="#pal"/></svg><span class="title"><a href="#">지금 나오는 여자분 진짜 귀엽네여 ㅎㅎㅎ말도 잘하시고</a><b class="cnt">[1]</b></span><span class="name">무앤노</span><span class="date">15/04/11<br>18:44</span><span class="hit">36</span><span class="rec">1/0</span></div>
            <div class="row"><span class="no">9887753</span><svg class="kind"><use href="#pal"/></svg><span class="title"><a href="#">프리사이즈얔ㅋㅋㅋㅋㅋㅋㅋㅋㅋㅋㅋㅋㅋㅋㅋㅋㅋㅋ</a></span><span class="name">유물발굴단원</span><span class="date">15/04/11<br>18:44</span><span class="hit">22</span><span class="rec">0/0</span></div>
            <div class="row"><span class="no">9887752</span><svg class="kind"><use href="#wing"/></svg><span class="title"><a href="#">이대에서 3시경 사진촬영을 부탁한 커플을 찾습니다(쿠키도 주셨어요)</a><svg class="mob"><use href="#mob"/></svg></span><span class="name"><b>cannot</b></span><span class="date">15/04/11<br>18:44</span><span class="hit">3</span><span class="rec">0/0</span></div>
            <div class="row"><span class="no">9887751</span><svg class="kind"><use href="#pad"/></svg><span class="title"><a href="#">ㅂㅅㄱ)이번에 나온 다크소울2 질문</a><b class="cnt">[1]</b></span><span class="name"><b>KuroNeko</b></span><span class="date">15/04/11<br>18:44</span><span class="hit">6</span><span class="rec">0/0</span></div>
            <div class="row"><span class="no">9887750</span><svg class="kind"><use href="#ball"/></svg><span class="title"><a href="#">각성한 범모.gif</a><svg class="pic"><use href="#pic"/></svg></span><span class="name">공발업질럿</span><span class="date">15/04/11<br>18:44</span><span class="hit">14</span><span class="rec">0/0</span></div>
            <div class="row"><span class="no">9887749</span><svg class="kind"><use href="#lol"/></svg><span class="title"><a href="#">이야 이걸또 바론스틸 ㅋㅋㅋㅋㅋㅋㅋ</a><b class="cnt">[1]</b></span><span class="name">잦이가섯다</span><span class="date">15/04/11<br>18:43</span><span class="hit">24</span><span class="rec">0/0</span></div>
            <div class="row"><span class="no">9887748</span><svg class="kind"><use href="#lol"/></svg><span class="title"><a href="#">방금 페이커 한숨쉼 ㅠㅠㅠㅠㅠㅋㅋㅋㅋㅋㅋㅋㅋㅋㅋㅋㅋㅋㅋ</a><b class="cnt">[1]</b></span><span class="name"><b>nedine</b></span><span class="date">15/04/11<br>18:43</span><span class="hit">33</span><span class="rec">0/0</span></div>
            <div class="row"><span class="no">9887747</span><svg class="kind"><use href="#pal"/></svg><span class="title"><a href="#">쿠키런인형 귀엽다</a><svg class="mob"><use href="#mob"/></svg></span><span class="name"><b>Compostela</b></span><span class="date">15/04/11<br>18:43</span><span class="hit">36</span><span class="rec">0/0</span></div>
            <div class="row"><span class="no">9887746</span><svg class="kind"><use href="#pal"/></svg><span class="title"><a href="#">음 뭐지?</a><svg class="mob"><use href="#mob"/></svg></span><span class="name"><b>966</b></span><span class="date">15/04/11<br>18:43</span><span class="hit">88</span><span class="rec">0/0</span></div>
            <div class="row"><span class="no">9887745</span><svg class="kind"><use href="#lol"/></svg><span class="title"><a href="#">이번 MVP는 톰 확정이네요</a><b class="cnt">[1]</b></span><span class="name">아이구머니나</span><span class="date">15/04/11<br>18:43</span><span class="hit">22</span><span class="rec">0/0</span></div>
            <div class="row"><span class="no">9887744</span><svg class="kind"><use href="#lol"/></svg><span class="title"><a href="#">와 반격진짜 skt장난없네요</a><b class="cnt">[3]</b></span><span class="name"><b>GoTh</b>ㅏ리</span><span class="date">15/04/11<br>18:42</span><span class="hit">32</span><span class="rec">0/0</span></div>
            <div class="row"><span class="no">9887743</span><svg class="kind"><use href="#gx"/></svg><span class="title"><a href="#">20살인데 탈모...</a><b class="cnt">[1]</b></span><span class="name anon">익명<b>aWZra</b></span><span class="date">15/04/11<br>18:42</span><span class="hit">9</span><span class="rec">0/0</span></div>
            <div class="row"><span class="no">9887742</span><svg class="kind"><use href="#tie"/></svg><span class="title"><a href="#">미용실 관련 사이트나 추천 좀 받고싶은데요..</a><svg class="mob"><use href="#mob"/></svg></span><span class="name"><b>H</b>ㅣ<b>H</b>ㅓ</span><span class="date">15/04/11<br>18:42</span><span class="hit">4</span><span class="rec">0/0</span></div>
            <div class="row"><span class="no">9887741</span><svg class="kind"><use href="#pal"/></svg><span class="title"><a href="#">보니까 다섯개 가지고</a><b class="cnt">[1]</b></span><span class="name">위너스</span><span class="date">15/04/11<br>18:42</span><span class="hit">117</span><span class="rec">0/0</span></div>
            <div class="row"><span class="no">9887740</span><svg class="kind"><use href="#pal"/></svg><span class="title"><a href="#">홍진경씨 기획ㅠㅠ하지 말았으면...</a><svg class="mob"><use href="#mob"/></svg></span><span class="name">뭐해?</span><span class="date">15/04/11<br>18:42</span><span class="hit">85</span><span class="rec">2/0</span></div>
            <div class="row"><span class="no">9887739</span><svg class="kind"><use href="#girl"/></svg><span class="title"><a href="#">만화를 찾고 있어요 ㅠㅠ도와주세요 ㅠㅠ</a><b class="cnt">[1]</b></span><span class="name"><b>BONAPART</b></span><span class="date">15/04/11<br>18:42</span><span class="hit">21</span><span class="rec">0/0</span></div>
            <div class="row"><span class="no">9887738</span><svg class="kind"><use href="#gx"/></svg><span class="title"><a href="#">남자친구가 있는데도 외로운느낌이 들어요..</a><svg class="mob"><use href="#mob"/></svg></span><span class="name anon">익명<b>YmlpY</b></span><span class="date">15/04/11<br>18:42</span><span class="hit">19</span><span class="rec">0/0</span></div>
            <div class="row"><span class="no">9887737</span><svg class="kind"><use href="#raid"/></svg><span class="title"><a href="#">고통받기2</a><svg class="pic"><use href="#pic"/></svg></span><span class="name">스크툴루</span><span class="date">15/04/11<br>18:42</span><span class="hit">28</span><span class="rec">0/0</span></div>
            <div class="row"><span class="no">9887736</span><svg class="kind"><use href="#clover"/></svg><span class="title"><a href="#">골드 2개를 질렀는데...</a><svg class="mob"><use href="#mob"/></svg></span><span class="name">능능등능</span><span class="date">15/04/11<br>18:42</span><span class="hit">18</span><span class="rec">0/0</span></div>
            <div class="row"><span class="no">9887735</span><svg class="kind"><use href="#raid"/></svg><span class="title"><a href="#">레이드 부화장좀 알려주세용</a><b class="cnt">[1]</b><svg class="mob"><use href="#mob"/></svg></span><span class="name">백린</span><span class="date">15/04/11<br>18:42</span><span class="hit">13</span><span class="rec">0/0</span></div>
            <div class="row"><span class="no">9887734</span><svg class="kind"><use href="#raid"/></svg><span class="title"><a href="#">개신팩 익스 2.2.2*2 가실분? (작성자 염제미미)</a><b class="cnt">[4]</b></span><span class="name">내존슨니존슨</span><span class="date">15/04/11<br>18:41</span><span class="hit">11</span><span class="rec">0/0</span></div>
        </div>

        <div class="pages">
            <b>[1]</b> <a href="#">[2]</a> <a href="#">[3]</a> <a href="#">[4]</a> <a href="#">[5]</a> <a href="#">[6]</a> <a href="#">[7]</a> <a href="#">[8]</a> <a href="#">[9]</a> <a href="#">[10]</a> <a class="next" href="#">[다음10개▶]</a>
        </div>
        <form class="search bottom-search">
            <span class="sel"><select><option>제목</option></select></span>
            <input class="q" type="text">
            <button class="go" type="button">검색</button>
        </form>
    </div>

    <div class="footer">
        <a href="#">운영진에게 바란다(삭제요청/제안/항의)</a>
        <a href="#">신고게시판</a>
        <a href="#">오유운영게시판</a>
        <a href="#">보류</a>
        <a href="#">개인정보취급방침</a>
        <a href="#">청소년보호정책</a>
    </div>
</body>
</html>
```

FILE: styles.css
```css
* {
    margin: 0;
    padding: 0;
    box-sizing: border-box;
}

html, body {
    height: 1910px;
    overflow: hidden;
}

body {
    background: #4f6c78;
    font-family: "Noto Sans CJK KR", "Noto Sans", sans-serif;
    font-size: 13px;
    color: #666;
}

a { text-decoration: none; color: inherit; }

.defs { display: none; }

.wrap {
    width: 1003px;
    margin-left: 132px;
}

/* top bar */
.top {
    height: 33px;
    background: #fff;
}

.top-inner {
    display: flex;
    align-items: flex-start;
    height: 33px;
}

.logo {
    display: flex;
    align-items: flex-end;
    width: 235px;
    height: 33px;
    color: #888;
}

.ribbon { width: 21px; height: 31px; margin-right: 4px; flex: none; }
.logo-small { position: relative; font-size: 14px; font-weight: 700; line-height: 26px; color: #8c8c8c; }
.logo-small::after {
    content: "";
    position: absolute;
    left: 0;
    right: 0;
    bottom: 1px;
    height: 3px;
    border-radius: 2px;
    background: #ddd;
}
.logo-big { font-size: 24px; font-weight: 500; line-height: 33px; margin-left: 2px; color: #8c8c8c; letter-spacing: -1px; }
.logo-url { position: relative; font-family: "DejaVu Sans Mono", monospace; font-size: 14px; line-height: 25px; margin-left: 4px; color: #8a8a8a; }
.logo-url::before {
    content: "";
    position: absolute;
    left: 2px;
    width: 42px;
    top: 2px;
    height: 3px;
    border-radius: 2px;
    background: #ddd;
}

.quick {
    display: flex;
    align-items: center;
    height: 16px;
    margin-top: 9px;
    font-size: 12px;
    font-weight: 700;
    color: #111;
    width: 156px;
}

.ico16 { width: 16px; height: 16px; margin-right: 3px; flex: none; }
.quick a { margin-right: 4px; white-space: nowrap; }

.new-badge {
    display: inline-block;
    width: 20px;
    height: 14px;
    margin-right: 3px;
    background: #ffd400;
    color: #d8141c;
    font: 700 7px/14px "DejaVu Sans", sans-serif;
    text-align: center;
    flex: none;
}

.search {
    display: flex;
    align-items: stretch;
    font-family: "Noto Sans CJK KR", sans-serif;
    color: #666;
}

.sel {
    display: block;
    position: relative;
    width: 59px;
}

.sel select {
    appearance: none;
    width: 100%;
    height: 100%;
    padding-left: 6px;
    border: 1px solid #bbb;
    border-radius: 5px;
    background: linear-gradient(#fff, #f1f1f1);
    font: inherit;
    font-size: 15px;
    color: #666;
    letter-spacing: 1px;
}

.sel::before, .sel::after {
    content: "";
    position: absolute;
    right: 6px;
    border-left: 3px solid transparent;
    border-right: 3px solid transparent;
}
.sel::before { top: 8px; border-bottom: 4px solid #666; }
.sel::after { bottom: 7px; border-top: 4px solid #666; }

.search .q {
    border: 1px solid #bbb;
    border-radius: 4px;
    background: #fff;
}

.search .go {
    border: 1px solid #bbb;
    border-radius: 5px;
    background: linear-gradient(#fff, #ececec);
    font: inherit;
    font-size: 15px;
    color: #666;
}

.top-search {
    height: 25px;
    margin-top: 5px;
    gap: 7px;
}
.top-search .q { width: 89px; }
.top-search .go { width: 52px; margin-left: 1px; }

.login {
    display: flex;
    height: 25px;
    margin-top: 8px;
    margin-left: 54px;
}

.login input {
    width: 65px;
    height: 25px;
    margin-right: 3px;
    border: 0;
    border-top: 2px solid #888;
    border-left: 2px solid #888;
    font: 15px "DejaVu Sans", sans-serif;
    padding-left: 1px;
}
.login input:nth-child(2) { width: 67px; }
.login input::placeholder { color: #aaa; }

.login button {
    width: 47px;
    height: 16px;
    margin-top: 2px;
    border: 1px solid #ccc;
    background: #fff;
    font: 10px/14px "Noto Sans CJK KR", sans-serif;
    color: #666;
    letter-spacing: .5px;
}

.member {
    margin-top: 11px;
    margin-left: 13px;
    font-size: 12px;
    line-height: 18px;
    color: #2a7ba5;
    white-space: nowrap;
    word-spacing: 1px;
}

/* board menus */
.nav1 { height: 40px; padding-top: 8px; background: #0085b8; border-bottom: 1px dotted #cfe; }
.nav2 { height: 35px; padding-top: 4px; background: #3fa5c8; border-bottom: 1px dotted #cfe; }
.nav3 { height: 33px; padding-top: 4px; background: #0095b8; }

.nav-row { display: flex; align-items: flex-start; gap: 2.5px; }
.nav1 .nav-row { gap: 2.8px; }

.btn {
    display: flex;
    align-items: center;
    justify-content: center;
    flex: none;
    height: 25px;
    border: 1px solid #111;
    box-shadow: inset 1px 1px rgba(255, 255, 255, .25), inset -1px -1px rgba(0, 0, 0, .3);
    color: #fff;
    font-size: 12px;
    line-height: 23px;
    white-space: nowrap;
    overflow: hidden;
}

.btn svg { width: 17px; height: 17px; flex: none; }
.btn svg.small { width: 13px; height: 18px; }
.btn svg.full { width: 23px; height: 23px; }
.btn svg.full-h { width: 17px; height: 21px; margin-right: 1px; }
.btn svg.fish { width: 25px; height: 18px; }

.w17 { width: 17px; } .w19 { width: 19px; } .w20 { width: 20px; } .w21 { width: 21px; }
.w22 { width: 22px; } .w23 { width: 23px; } .w24 { width: 24px; } .w25 { width: 25px; }
.w26 { width: 26px; } .w29 { width: 29px; } .w46 { width: 46px; } .w47 { width: 47px; }
.w48 { width: 48px; } .w49 { width: 49px; } .w55 { width: 55px; } .w57 { width: 57px; }
.w58 { width: 58px; } .w60 { width: 60px; } .w64 { width: 64px; } .w71 { width: 71px; }
.w78 { width: 78px; } .w79 { width: 79px; } .w88 { width: 88px; } .w108 { width: 108px; }

.red { background: #e0201c; outline: 1px solid #fff; }
.orange { background: #f57a00; outline: 1px solid #fff; }
.gray { background: #667362; }
.purple { background: #5a4f9c; }
.olive { background: #6f8018; }
.plum { background: #70306e; }
.pale { background: #f6ffd4; }
.maroon { background: #6a2a2a; }
.green { background: #4d7a20; }
.sky { background: #8fc8c0; }
.dgreen { background: #1f7a50; }
.brown { background: #8a5a20; }
.camo { background: #1c3414; }
.blue { background: #0f62c0; }
.cyan { background: #1090e0; }
.crimson { background: #c81828; }
.royal { background: #2a5cc8; }
.teal { background: #27646a; }
.rose { background: #8a3a4a; }
.black { background: #222; }
.white { background: #fff; }
.jade { background: #2f8a88; }
.ocean { background: #10708f; }
.lime { background: #6f9a20; }
.drab { background: #5c5a18; }
.brown2 { background: #6a3020; }
.yellow { background: #8fb000; }
.ice { background: #c8f4f8; }
.leaf { background: #3fa030; }
.tan { background: #c8b080; }
.azure { background: #0a6ae0; }
.pink { background: #c45a92; }
.grass { background: #5a9a30; }
.sage { background: #c4d4ac; }
.navy { background: #2a3a5a; }

.tiny { font-size: 9px; letter-spacing: -.5px; }
.shi { font-size: 17px; font-weight: 700; color: #f06a10; }
.qm { font: 700 14px "DejaVu Sans", sans-serif; }
.bf { font: 700 11px "DejaVu Sans", sans-serif; }
.sim { font: 700 8px "DejaVu Sans", sans-serif; letter-spacing: -.5px; }
.push { margin-left: 3px; }

.game-group { display: flex; gap: 2px; margin-left: 3px; }

.etc {
    margin-left: 24px;
    width: 74px;
    height: 25px;
    border: 1px solid #222;
    background: linear-gradient(#fff 70%, #ddd);
    color: #555;
    font-size: 12px;
    line-height: 23px;
    text-align: center;
    flex: none;
}

.crumb {
    display: flex;
    align-items: center;
    justify-content: center;
    height: 27px;
    background: #d8f0f5;
    border-bottom: 2px solid #233a48;
    font-size: 12px;
    letter-spacing: .55px;
    color: #3a7a9a;
}
.crumb svg { width: 15px; height: 18px; margin-right: 4px; }

/* content */
.main {
    width: 824px;
    height: 1687px;
    margin: 14px 0 15px 222px;
    padding: 15px 12px 0;
    background: #fff;
}

.boxes { display: flex; gap: 6px; }

.box {
    width: 395px;
    height: 275px;
    border: 2px solid;
    border-radius: 9px;
    overflow: hidden;
}
.box-red { border-color: #e33a1b; }
.box-orange { border-color: #f37d0d; }

.box-head {
    display: flex;
    justify-content: space-between;
    align-items: center;
    height: 25px;
    padding: 0 8px;
    color: #fff;
    font-size: 12px;
    font-weight: 500;
    letter-spacing: .4px;
}
.box-red .box-head { background: #e33a1b; }
.box-orange .box-head { background: #f37d0d; }

.more { font: 700 7px "DejaVu Sans", sans-serif; letter-spacing: 0; }
.more i { font-style: normal; color: #ffc400; font-size: 8px; }

.box-list { list-style: none; padding: 4px 8px 0; }

.box-list li {
    display: flex;
    align-items: center;
    height: 20px;
    font-size: 12px;
    line-height: 20px;
    color: #666;
    word-spacing: 1.5px;
    letter-spacing: .55px;
    white-space: nowrap;
}

.box-list svg { width: 14px; height: 14px; flex: none; }
.box-list svg.w16 { width: 16px; padding-right: 2px; }
.box-list svg.w17 { width: 17px; padding-right: 3px; }
.box-list svg.w18 { width: 18px; padding-right: 4px; }
.box-list svg.w21 { width: 21px; padding-right: 7px; }

.cnt {
    font: 700 9.5px "DejaVu Sans", sans-serif;
    color: #666;
    margin-left: 9px;
    letter-spacing: 0;
}

.box-list em {
    margin-left: auto;
    font: 700 11px "DejaVu Sans", sans-serif;
    color: #f00;
    letter-spacing: 0;
}

.list-title {
    display: flex;
    align-items: center;
    height: 20px;
    margin-top: 17px;
    font-size: 12px;
    font-weight: 700;
    color: #111;
}
.list-title .new-badge { margin-right: 1px; }

.list-head {
    display: flex;
    height: 23px;
    width: 800px;
    margin-top: 6px;
    border: 1px solid #0085b0;
    border-radius: 3px;
    background: linear-gradient(#bfe0e8 30%, #94cbd9 30%);
    color: #2b6a8a;
    font-size: 12px;
    line-height: 21px;
}
.list-head span { flex: none; width: 40px; text-align: center; white-space: nowrap; }
.h-no { margin-left: 3px; }
.h-title { margin-left: 247px; }
.h-name { margin-left: 242px; }
.h-date { margin-left: 42px; }
.h-hit { margin-left: 19px; }
.h-rec { margin-left: 1px; }

.list { width: 800px; }

.row {
    display: grid;
    grid-template-columns: 49px 23px 481px 72px 100px 24px 51px;
    align-items: center;
    height: 40.57px;
    border-bottom: 1px solid #0085b5;
    font-size: 12px;
}

.no { font: 11px "DejaVu Sans", sans-serif; color: #666; }

.kind { width: 16px; height: 16px; margin-top: 2px; }

.title {
    display: flex;
    align-items: center;
    white-space: nowrap;
    letter-spacing: .55px;
    word-spacing: 1.5px;
    line-height: 20px;
}
.title a { color: #2222ff; }
.title .cnt { margin-left: 4px; font-size: 9px; }

.pic { width: 13px; height: 12px; margin-left: 8px; flex: none; }
.mob { width: 9px; height: 12px; margin-left: 5px; flex: none; }
.title a + .mob { margin-left: 8px; }

.name {
    color: #808080;
    letter-spacing: .55px;
    white-space: nowrap;
}
.name b { font: 700 10px "DejaVu Sans", sans-serif; letter-spacing: -.4px; vertical-align: 1px; }
.anon { color: #e09a30; }

.date {
    font: 11px/20px "DejaVu Sans", sans-serif;
    letter-spacing: .4px;
    color: #222;
    text-align: center;
}

.hit {
    font: 11px "DejaVu Sans", sans-serif;
    color: #ff22ff;
    text-align: right;
}

.rec {
    padding-left: 16px;
    font: 700 11px "DejaVu Sans", sans-serif;
    color: #f00;
}

.pages {
    width: 800px;
    margin-top: 41px;
    text-align: center;
    font: 17px/24px "Liberation Sans", "Noto Sans CJK KR", sans-serif;
    word-spacing: 2px;
    color: #5a5aff;
}
.pages b { color: #f00; }
.pages a { color: #5a5aff; }
.pages .next { color: #0000f0; }

.bottom-search {
    height: 25px;
    margin-top: 9px;
    margin-left: 232px;
    gap: 7px;
}
.bottom-search .sel { width: 73px; }
.bottom-search .q { width: 197px; }
.bottom-search .go { width: 51px; margin-left: -1px; }

.footer {
    display: flex;
    justify-content: center;
    height: 26px;
    border-top: 2px solid #1f3440;
    background: #009fbf;
    color: #d8f0f5;
    font-size: 12px;
    letter-spacing: .7px;
    line-height: 24px;
}

.footer a {
    padding: 0 11px;
    position: relative;
}

.footer a + a::before {
    content: "";
    position: absolute;
    left: 0;
    top: 6px;
    height: 13px;
    border-left: 1px solid #fff;
}
```
